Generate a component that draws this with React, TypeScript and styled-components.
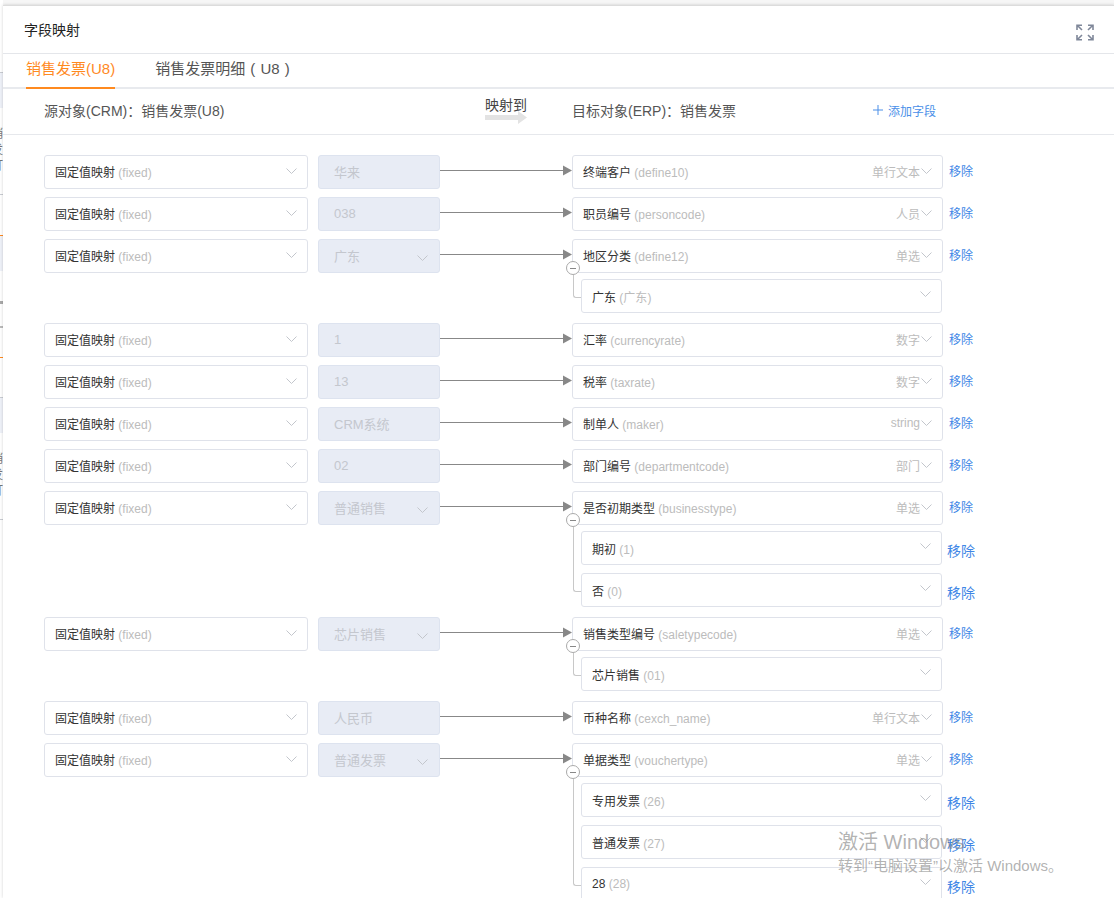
import React from 'react'
import styled, { createGlobalStyle } from 'styled-components'

const GlobalStyle = createGlobalStyle`
  html, body {
    margin: 0;
    height: 100%;
    overflow: hidden;
    background: #f6f6f6;
    font-family: "Liberation Sans", "Noto Sans CJK SC", sans-serif;
    font-size: 12px;
    color: #333;
  }
`

const Page = styled.div`
  position: relative;
  display: flex;
  height: 898px;
  overflow: hidden;
`

// what peeks out from the page behind the dialog
const Strip = styled.div`
  width: 3px;
  flex: none;
  display: flex;
  flex-direction: column;
  background: #fff;
  overflow: hidden;
`

const StripBlock = styled.div<{ $h: number; $bg?: string; $line?: string }>`
  flex: none;
  height: ${p => p.$h}px;
  background: ${p => p.$bg || 'transparent'};
  border-top: ${p => (p.$line ? `1px solid ${p.$line}` : 'none')};
  box-sizing: border-box;
`

const StripText = styled.div`
  flex: none;
  height: 48px;
  line-height: 16px;
  margin-left: -9px;
  width: 12px;
  font-size: 12px;
  color: #777;
`

const Dialog = styled.div`
  flex: 1;
  min-width: 0;
  margin-top: 5px;
  background: #fff;
  border-top: 1px solid #dcdcdc;
  box-shadow: 0 0 3px rgba(0, 0, 0, 0.18);
  overflow: hidden;
`

const Header = styled.div`
  height: 45px;
  display: flex;
  align-items: center;
  justify-content: space-between;
  padding: 0 20px 2px 21px;
  border-bottom: 1px solid #e4e6ea;
  font-size: 14px;
  color: #222;
`

const ExpandSvg = styled.svg`
  margin-top: 7px;
  fill: none;
  stroke: #7f8799;
  stroke-width: 1.6;
`

const Tabs = styled.div`
  height: 33px;
  display: flex;
  gap: 40px;
  padding-left: 23px;
  border-bottom: 2px solid #e8eaee;
`

const Tab = styled.div<{ $active?: boolean }>`
  height: 35px;
  line-height: 29px;
  font-size: 15px;
  word-spacing: 1px;
  box-sizing: border-box;
  color: ${p => (p.$active ? '#ff8a1f' : '#555')};
  border-bottom: 2px solid ${p => (p.$active ? '#ff8a1f' : 'transparent')};
`

const SubHeader = styled.div`
  height: 41px;
  display: flex;
  align-items: center;
  padding: 0 0 4px 41px;
  border-bottom: 1px solid #e6e8ec;
  font-size: 14px;
  color: #555;
`

const SourceTitle = styled.div`
  width: 441px;
`

const MapTo = styled.div`
  width: 87px;
  display: flex;
  flex-direction: column;
  line-height: 16px;
  margin-top: 1px;
  color: #444;
`

const MapArrowSvg = styled.svg`
  display: block;
  margin-top: -2px;
`

const TargetTitle = styled.div`
  width: 301px;
`

const AddField = styled.div`
  display: flex;
  align-items: center;
  gap: 5px;
  margin-top: 1px;
  font-size: 12px;
  color: #4a8fe8;
`

const Body = styled.div`
  display: flex;
  flex-direction: column;
  gap: 8px;
  padding: 20px 0 0 41px;
`

const Group = styled.div`
  display: flex;
  flex-direction: column;
  gap: 6px;
`

const Row = styled.div`
  display: flex;
  height: 34px;
`

const Box = styled.div<{ $w: number }>`
  width: ${p => p.$w}px;
  height: 34px;
  flex: none;
  display: flex;
  align-items: center;
  justify-content: space-between;
  box-sizing: border-box;
  padding: 0 10px 2px;
  background: #fff;
  border: 1px solid #dfe2ea;
  border-radius: 3px;
  white-space: nowrap;
`

const ValueBox = styled(Box)`
  margin-left: 10px;
  padding: 0 11px 2px 15px;
  background: #e8ecf5;
  border-color: #dde3ef;
  font-size: 13px;
  color: #c4c7ce;
`

const SubBox = styled(Box)`
  padding-bottom: 0;
`

const Code = styled.span`
  color: #bcbcbc;
`

const Side = styled.div`
  display: flex;
  align-items: center;
  gap: 1px;
  color: #bcbcbc;
`

const Chevron = styled.svg<{ $dy: number }>`
  flex: none;
  width: 11px;
  height: 6px;
  transform: translateY(${p => p.$dy}px);
  fill: none;
  stroke: #c3c6cc;
  stroke-width: 1;
`

const Wire = styled.svg`
  flex: none;
  width: 132px;
  height: 34px;
`

const Remove = styled.div<{ $sub?: boolean }>`
  margin-left: ${p => (p.$sub ? 5 : 6)}px;
  font-size: ${p => (p.$sub ? 14 : 12)}px;
  line-height: ${p => (p.$sub ? 40 : 35)}px;
  color: #3f87e6;
`

const SubList = styled.div`
  position: relative;
  display: flex;
  flex-direction: column;
  gap: 8px;
  margin-left: 537px;
  padding-bottom: 2px;

  &::before {
    content: '';
    position: absolute;
    left: -8px;
    top: -4px;
    bottom: 17px;
    width: 7px;
    border-left: 1px solid #c8c8c8;
    border-bottom: 1px solid #c8c8c8;
    border-bottom-left-radius: 3px;
  }
`

const Collapse = styled.div`
  position: absolute;
  left: -15px;
  top: -18px;
  width: 12px;
  height: 12px;
  border: 1px solid #aaa;
  border-radius: 50%;
  background: #fff;
  display: flex;
  align-items: center;
  justify-content: center;

  &::after {
    content: '';
    width: 6px;
    height: 1px;
    background: #888;
  }
`

const Watermark = styled.div`
  position: absolute;
  left: 838px;
  top: 829px;
  color: rgba(130, 130, 130, 0.62);
  pointer-events: none;
`

const WatermarkTitle = styled.div`
  font-size: 20px;
  line-height: 26px;
`

const WatermarkHint = styled.div`
  font-size: 15px;
  line-height: 20px;
  margin-top: 1px;
`

const ChevronIcon = ({ dy }: { dy: number }) => (
  <Chevron $dy={dy} viewBox="0 0 11 6">
    <path d="M0.5 0.5 L5.5 5.5 L10.5 0.5" />
  </Chevron>
)

const ExpandIcon = () => (
  <ExpandSvg width="18" height="17" viewBox="0 0 18 17">
    <path d="M1 6V1.2H6M1.2 1.2L6 6" />
    <path d="M17 6V1.2H12M16.8 1.2L12 6" />
    <path d="M1 11V15.8H6M1.2 15.8L6 11" />
    <path d="M17 11V15.8H12M16.8 15.8L12 11" />
  </ExpandSvg>
)

const MapArrow = () => (
  <MapArrowSvg width="42" height="13" viewBox="0 0 42 13">
    <path d="M0 4H33V0L42 6.5L33 13V9H0Z" fill="#e3e3e3" />
  </MapArrowSvg>
)

const WireLine = () => (
  <Wire viewBox="0 0 132 34">
    <path d="M0 15.5H124" stroke="#888" strokeWidth="1" />
    <path d="M123 10.5L132 15.5L123 20.5Z" fill="#888" />
  </Wire>
)

interface SubOption {
  name: string
  code: string
  removable?: boolean
}

interface Mapping {
  value: string
  picker?: boolean
  name: string
  code: string
  type: string
  options?: SubOption[]
}

const mappings: Mapping[] = [
  { value: '华来', name: '终端客户', code: 'define10', type: '单行文本' },
  { value: '038', name: '职员编号', code: 'personcode', type: '人员' },
  {
    value: '广东', picker: true, name: '地区分类', code: 'define12', type: '单选',
    options: [{ name: '广东', code: '广东' }],
  },
  { value: '1', name: '汇率', code: 'currencyrate', type: '数字' },
  { value: '13', name: '税率', code: 'taxrate', type: '数字' },
  { value: 'CRM系统', name: '制单人', code: 'maker', type: 'string' },
  { value: '02', name: '部门编号', code: 'departmentcode', type: '部门' },
  {
    value: '普通销售', picker: true, name: '是否初期类型', code: 'businesstype', type: '单选',
    options: [
      { name: '期初', code: '1', removable: true },
      { name: '否', code: '0', removable: true },
    ],
  },
  {
    value: '芯片销售', picker: true, name: '销售类型编号', code: 'saletypecode', type: '单选',
    options: [{ name: '芯片销售', code: '01' }],
  },
  { value: '人民币', name: '币种名称', code: 'cexch_name', type: '单行文本' },
  {
    value: '普通发票', picker: true, name: '单据类型', code: 'vouchertype', type: '单选',
    options: [
      { name: '专用发票', code: '26', removable: true },
      { name: '普通发票', code: '27', removable: true },
      { name: '28', code: '28', removable: true },
    ],
  },
]

const MappingGroup = ({ item }: { item: Mapping }) => (
  <Group>
    <Row>
      <Box $w={264}>
        <span>固定值映射 <Code>(fixed)</Code></span>
        <ChevronIcon dy={0} />
      </Box>
      <ValueBox $w={122}>
        <span>{item.value}</span>
        {item.picker && <ChevronIcon dy={3} />}
      </ValueBox>
      <WireLine />
      <Box $w={371}>
        <span>{item.name} <Code>({item.code})</Code></span>
        <Side>
          {item.type}
          <ChevronIcon dy={0} />
        </Side>
      </Box>
      <Remove>移除</Remove>
    </Row>
    {item.options && (
      <SubList>
        <Collapse />
        {item.options.map(option => (
          <Row key={option.code}>
            <SubBox $w={361}>
              <span>{option.name} <Code>({option.code})</Code></span>
              <ChevronIcon dy={-2} />
            </SubBox>
            {option.removable && <Remove $sub>移除</Remove>}
          </Row>
        ))}
      </SubList>
    )}
  </Group>
)

export default function App() {
  return (
    <>
      <GlobalStyle />
      <Page>
        <Strip>
          <StripBlock $h={72} />
          <StripBlock $h={36} $bg="#eef1f8" $line="#c9ccd2" />
          <StripBlock $h={18} />
          <StripText>销<br />发<br />打</StripText>
          <StripBlock $h={20} />
          <StripBlock $h={41} $line="#c9ccd2" />
          <StripBlock $h={36} $bg="#eef1f8" $line="#ff8a1f" />
          <StripBlock $h={30} />
          <StripBlock $h={3} $bg="#aaa" />
          <StripBlock $h={22} />
          <StripBlock $h={2} $bg="#bbb" />
          <StripBlock $h={29} />
          <StripBlock $h={40} $line="#ff8a1f" />
          <StripBlock $h={36} $bg="#eef1f8" $line="#c9ccd2" />
          <StripBlock $h={18} />
          <StripText>销<br />发<br />打</StripText>
          <StripBlock $h={20} />
          <StripBlock $h={20} $line="#c9ccd2" />
        </Strip>
        <Dialog>
          <Header>
            <span>字段映射</span>
            <ExpandIcon />
          </Header>
          <Tabs>
            <Tab $active>销售发票(U8)</Tab>
            <Tab>销售发票明细 ( U8 )</Tab>
          </Tabs>
          <SubHeader>
            <SourceTitle>源对象(CRM)：销售发票(U8)</SourceTitle>
            <MapTo>
              映射到
              <MapArrow />
            </MapTo>
            <TargetTitle>目标对象(ERP)：销售发票</TargetTitle>
            <AddField>
              <svg width="10" height="10" viewBox="0 0 10 10" stroke="#4a8fe8" strokeWidth="1">
                <path d="M5 0V10M0 5H10" />
              </svg>
              添加字段
            </AddField>
          </SubHeader>
          <Body>
            {mappings.map(item => (
              <MappingGroup key={item.code} item={item} />
            ))}
          </Body>
        </Dialog>
        <Watermark>
          <WatermarkTitle>激活 Windows</WatermarkTitle>
          <WatermarkHint>转到“电脑设置”以激活 Windows。</WatermarkHint>
        </Watermark>
      </Page>
    </>
  )
}
